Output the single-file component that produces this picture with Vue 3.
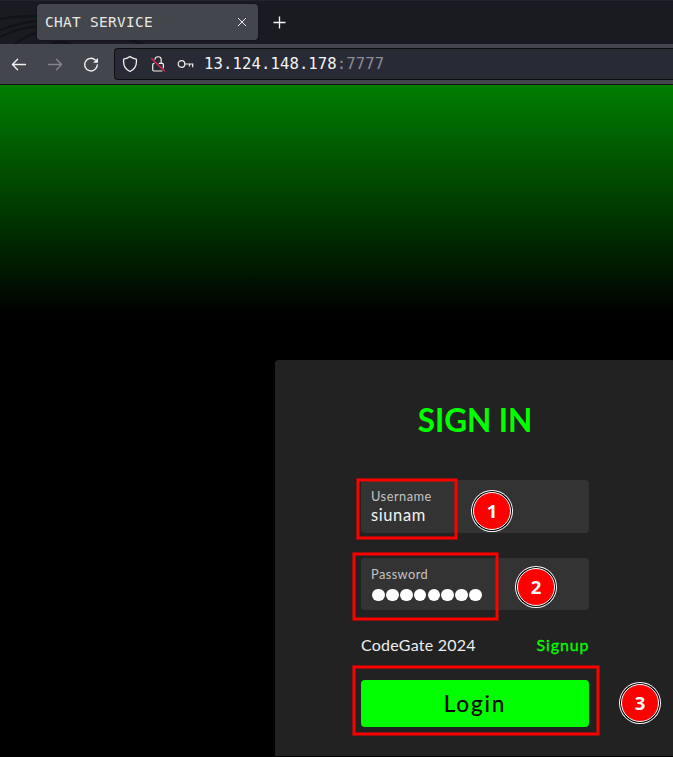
<script setup>
const boxes = [
  { left: 357, top: 479, width: 100, height: 60 },
  { left: 353, top: 553, width: 145, height: 67 },
  { left: 353, top: 666, width: 246, height: 69 },
]
const badges = [
  { n: 1, left: 471, top: 490 },
  { n: 2, left: 515, top: 566 },
  { n: 3, left: 619, top: 682 },
]
const px = ({ left, top, width, height }) => ({
  left: left + 'px', top: top + 'px',
  width: width && width + 'px', height: height && height + 'px',
})
</script>

<template>
  <div class="window">
    <header class="tabs">
      <svg class="theme" width="673" height="43" viewBox="0 0 673 43" fill="none" stroke="#121318" stroke-width="2.5">
        <path d="M0 18Q20 14 40 16M0 29Q20 21 40 20M0 36Q20 26 40 25M14 44Q24 35 40 31M50 44Q60 38 72 44M130 39L145 44" />
      </svg>
      <div class="tab">
        <span>CHAT SERVICE</span>
        <svg width="10" height="10" viewBox="0 0 10 10" fill="none" stroke="#eeeef0" stroke-width="1"><path d="M1 1L9 9M9 1L1 9" /></svg>
      </div>
      <svg class="plus" width="13" height="13" viewBox="0 0 13 13" fill="none" stroke="#f4f4f4" stroke-width="1.3"><path d="M6.5 .5V12.5M.5 6.5H12.5" /></svg>
    </header>
    <nav class="toolbar">
      <svg class="nav" width="16" height="16" viewBox="0 0 16 16" fill="none" stroke="#f1f1ee" stroke-width="1.3" stroke-linecap="round" stroke-linejoin="round"><path d="M14.5 8.5H1.6M6.6 3.3L1.4 8.5L6.6 13.7" /></svg>
      <svg class="nav" width="16" height="16" viewBox="0 0 16 16" fill="none" stroke="#85868a" stroke-width="1.3" stroke-linecap="round" stroke-linejoin="round"><path d="M1.5 8.5H14.4M9.4 3.3L14.6 8.5L9.4 13.7" /></svg>
      <svg class="nav" width="16" height="16" viewBox="0 0 16 16" fill="none" stroke="#f1f1ee" stroke-width="1.4" stroke-linecap="round"><path d="M12.3 4A6.3 6.3 0 1 0 14.3 9" /><path d="M15 1.9V6.8H10.1Z" fill="#f1f1ee" stroke="none" /></svg>
      <div class="url">
        <svg class="shield" width="16" height="18" viewBox="0 0 16 18" fill="none" stroke="#f1f1ee" stroke-width="1.3" stroke-linejoin="round"><path d="M8 1.5C6 3.2 3.8 3.8 1.7 4.1C1 9.2 3.2 14.2 8 16.5C12.8 14.2 15 9.2 14.3 4.1C12.2 3.8 10 3.2 8 1.5Z" /></svg>
        <svg class="lock" width="16" height="18" viewBox="0 0 16 18" fill="none" stroke="#f1f1ee" stroke-width="1.2"><path d="M4.9 4.6C5.2 .8 11.2 .8 11.2 4.6V8.4M8.8 8.4H12.2Q13.4 8.4 13.4 9.6V13.2M4.4 8.4Q2.7 8.4 2.7 9.8V14.8Q2.7 16 3.9 16H12.3" /><path d="M1.2 3.2L14.8 16.3" stroke="#e22850" stroke-width="1.4" /></svg>
        <svg class="key" width="18" height="10" viewBox="0 0 18 10" fill="none" stroke="#f1f1ee" stroke-width="1.2"><circle cx="4.5" cy="5" r="3.3" /><path d="M7.8 5H15.7V8.3M12.5 5V7.4" /></svg>
        <span class="address">13.124.148.178<i>:7777</i></span>
      </div>
    </nav>
    <main class="page">
      <section class="card">
        <h1>SIGN IN</h1>
        <div class="field user"><label>Username</label><span class="value">siunam</span></div>
        <div class="field pass"><label>Password</label><span class="dots"><b v-for="n in 8" :key="n"></b></span></div>
        <div class="links"><span>CodeGate 2024</span><a>Signup</a></div>
        <button><span>Login</span></button>
      </section>
    </main>
    <div v-for="(b, i) in boxes" :key="'box' + i" class="box" :style="px(b)"></div>
    <div v-for="b in badges" :key="b.n" class="badge" :style="px(b)"><span>{{ b.n }}</span></div>
  </div>
</template>

<style>
body { margin: 0; background: #000; }
</style>

<style scoped>
* { box-sizing: border-box; }
svg { display: block; flex: none; }
.window { position: relative; width: 673px; height: 757px; overflow: hidden; display: flex; flex-direction: column; font-family: Lato, sans-serif; }
.tabs { position: relative; height: 44px; flex: none; background: #1a1b21; border-top: 1px solid #23242b; display: flex; align-items: flex-start; padding: 3px 0 0 37px; }
.theme { position: absolute; left: 0; top: 0; }
.tab { position: relative; width: 221px; height: 36px; border-radius: 4px; background: #44464d; box-shadow: 0 0 2px #0c0d11; display: flex; align-items: center; justify-content: space-between; padding: 0 11px 0 8px; font: 14.4px/36px "DejaVu Sans Mono", monospace; letter-spacing: .33px; color: #e9e9e5; }
.plus { margin: 12px 0 0 15px; }
.toolbar { height: 41px; flex: none; background: #44464d; border-bottom: 1px solid #101116; display: flex; align-items: center; padding-left: 11px; }
.nav { margin-right: 20px; }
.url { flex: 1; height: 32px; margin-left: -5px; background: #282a36; border: 1px solid #0d0e12; border-right: 0; border-radius: 4px 0 0 4px; display: flex; align-items: center; padding-left: 7px; }
.lock { margin-left: 12px; }
.key { margin-left: 11px; }
.address { margin-left: 9px; font: 15.6px/30px "DejaVu Sans Mono", monospace; letter-spacing: .1px; color: #f4f4f1; }
.address i { font-style: normal; color: #8c8d94; }
.page { flex: 1; background: linear-gradient(#007e00 0, #000 230px); padding: 275px 0 0 275px; }
.card { width: 400px; height: 396px; background: #222; border-radius: 4px 4px 0 0; padding: 40px 86px 0; display: flex; flex-direction: column; }
h1 { margin: 0; height: 40px; font-size: 31.5px; line-height: 41px; font-weight: 700; letter-spacing: -.1px; color: #0f0; text-align: center; white-space: nowrap; }
.field { width: 228px; background: #333; border-radius: 4px; padding: 8px 10px 0; display: flex; flex-direction: column; }
.user { height: 53px; margin-top: 40px; }
.pass { height: 52px; margin-top: 25px; }
label { font-size: 12.8px; line-height: 17px; letter-spacing: .5px; color: #c4c4c4; }
.pass label { letter-spacing: .42px; }
.value { font-size: 16.5px; line-height: 20px; letter-spacing: .6px; color: #f4f4f4; }
.dots { display: flex; gap: 1.1px; padding: 5.5px 0 0 1px; }
.dots b { width: 12.8px; height: 12.8px; border-radius: 50%; background: #fff; flex: none; }
.links { margin-top: 25px; height: 20px; display: flex; justify-content: space-between; font-size: 16px; line-height: 20px; letter-spacing: .22px; color: #eee; }
.links a { color: #0f0; letter-spacing: .85px; margin-right: -.3px; -webkit-text-stroke: .3px #0f0; }
button { margin: 25px 0 0; height: 47px; border: 0; border-radius: 4px; background: #0f0; color: #000; font: 400 22.5px/47px Lato, sans-serif; letter-spacing: 1.9px; padding: 0; -webkit-text-stroke: .2px #000; }
.box { position: absolute; border: 2px solid #f00; box-shadow: 0 0 0 1px rgba(255, 0, 0, .5), inset 0 0 0 1px rgba(255, 0, 0, .5); }
.badge { position: absolute; width: 42px; height: 42px; border-radius: 50%; background: #fff; }
.badge::before { content: ""; position: absolute; inset: 1px; border-radius: 50%; background: #000; }
.badge::after { content: ""; position: absolute; inset: 2px; border-radius: 50%; background: #f00; border: 1px solid #fff; }
.badge span { position: absolute; z-index: 1; inset: 0; text-align: center; font: 700 18.5px/42px "Noto Sans", sans-serif; color: #fff; }
</style>
